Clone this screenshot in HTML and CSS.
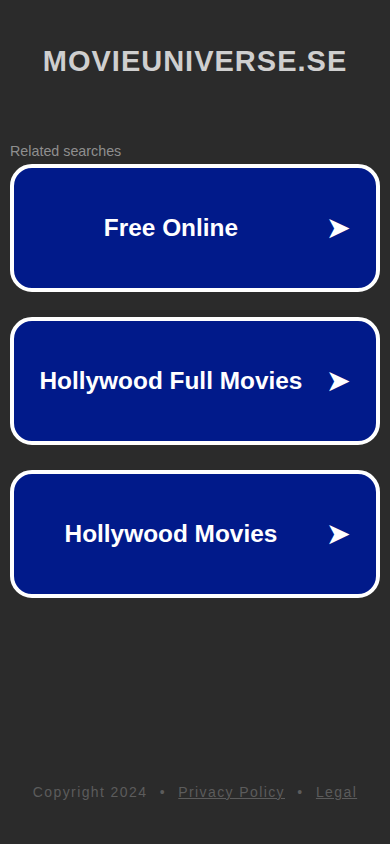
FILE: index.html
```html
<!DOCTYPE html>
<html>
<head>
	<title>movieuniverse.se</title>
	<meta name="viewport" content="width=device-width, initial-scale=1">
	<link rel="stylesheet" href="styles.css">
</head>

<body>
	<div id="page">
		<div id="header">
			<h1 class="domain">MOVIEUNIVERSE.SE</h1>
		</div>

		<div id="searches">
			<div class="related">Related searches</div>
			<a class="searchbtn" href="#"><span class="label">Free Online</span><span class="arrow">&#10148;</span></a>
			<a class="searchbtn" href="#"><span class="label">Hollywood Full Movies</span><span class="arrow">&#10148;</span></a>
			<a class="searchbtn" href="#"><span class="label">Hollywood Movies</span><span class="arrow">&#10148;</span></a>
		</div>

		<div id="footer">
			Copyright 2024 <span class="dot">&bull;</span> <a href="#">Privacy Policy</a> <span class="dot">&bull;</span> <a href="#">Legal</a>
		</div>
	</div>
</body>
</html>
```

FILE: styles.css
```css
*{
	box-sizing:border-box;
}

body{
	margin:0;
	background-color:#2b2b2b;
	font-family:"Liberation Sans", Arial, sans-serif;
}

#page{
	min-height:844px;
	display:flex;
	flex-direction:column;
}

#header{
	height:122px;
	display:flex;
	align-items:center;
	justify-content:center;
}

.domain{
	margin:0;
	font-size:29px;
	font-weight:bold;
	letter-spacing:1px;
	color:#cfcfcf;
}

#searches{
	padding:21px 10px 0 10px;
}

.related{
	font-size:14.3px;
	line-height:16px;
	color:#8f8f8f;
	margin-bottom:5px;
}

.searchbtn{
	display:flex;
	align-items:center;
	height:128px;
	margin-bottom:25px;
	padding:0 25px 0 0;
	background-color:#011a8a;
	border:4px solid #fff;
	border-radius:22px;
	text-decoration:none;
	color:#fff;
}

.searchbtn .label{
	flex:1;
	padding-left:2px;
	text-align:center;
	font-size:24.4px;
	font-weight:bold;
}

.searchbtn .arrow{
	font-family:"DejaVu Sans", sans-serif;
	font-size:30px;
	line-height:30px;
}

#footer{
	margin-top:auto;
	padding-bottom:42px;
	text-align:center;
	font-size:14px;
	line-height:20px;
	letter-spacing:1.4px;
	color:#5c5c5c;
}

#footer a{
	color:#5c5c5c;
}

.dot{
	margin:0 7px;
}
```
